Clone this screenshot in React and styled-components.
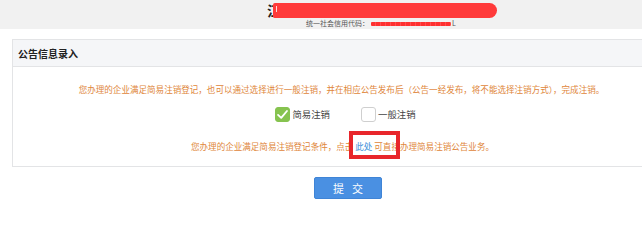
import React, { Component } from "react"
import styled, { createGlobalStyle } from "styled-components"

const GlobalStyle = createGlobalStyle`
  html, body {
    margin: 0;
    padding: 0;
    background: #fff;
    overflow: hidden;
  }
  body {
    font-family: "Noto Sans CJK SC", "Microsoft YaHei", sans-serif;
    color: #333;
  }
`

const Page = styled.div`
  width: 100%;
`

const TopBand = styled.div`
  height: 29px;
  background: #f1f1f1;
  display: flex;
  flex-direction: column;
  align-items: flex-start;
  padding-left: 267px;
  box-sizing: border-box;
`

const NameRow = styled.div`
  position: relative;
  height: 18px;
  display: flex;
  align-items: center;
  margin-top: 1px;
`

const NameText = styled.span`
  font-size: 14px;
  font-weight: 700;
  line-height: 18px;
  color: #222;
`

const NameMask = styled.span`
  position: absolute;
  left: 6px;
  top: 2px;
  width: 224px;
  height: 15px;
  background: #ff3a3a;
  border-radius: 2px 8px 8px 2px;

  &::after {
    content: "";
    position: absolute;
    left: 3px;
    top: 3px;
    width: 1px;
    height: 6px;
    background: rgba(255, 255, 255, 0.8);
  }
`

const CodeRow = styled.div`
  display: flex;
  align-items: center;
  margin-left: 39px;
  font-size: 7px;
  line-height: 9px;
  color: #555;
`

const CodeMask = styled.span`
  display: inline-block;
  width: 80px;
  height: 4px;
  margin: 0 1px 0 2px;
  background: repeating-linear-gradient(
    90deg,
    #ff3030 0,
    #ff3030 4px,
    #ff6a6a 5px
  );
  border-radius: 1px;
`

/* the panel runs on past the right edge of the shot, so no right border */
const Panel = styled.div`
  margin: 10px 0 0 12px;
  border: 1px solid #e3e4e6;
  border-right: none;
`

const PanelHead = styled.div`
  height: 26px;
  background: #f5f6f8;
  border-bottom: 1px solid #e3e4e6;
  display: flex;
  align-items: center;
  padding-left: 5px;
  font-size: 10px;
  font-weight: 700;
  color: #222;
`

const PanelBody = styled.div`
  display: flex;
  flex-direction: column;
  align-items: center;
  padding: 15px 0 13px 28px;
`

const Notice = styled.p`
  margin: 0;
  font-size: 8.55px;
  line-height: 14px;
  color: #e0863a;
  white-space: nowrap;
`

const Choices = styled.div`
  display: flex;
  align-items: center;
  gap: 31px;
  margin: 10px 0 0 8px;
`

const Choice = styled.label`
  display: flex;
  align-items: center;
  gap: 2px;
  font-size: 9.4px;
  line-height: 16px;
  color: #444;
  cursor: pointer;
`

const Box = styled.span`
  width: 15px;
  height: 15px;
  box-sizing: border-box;
  border-radius: 3px;
  display: flex;
  align-items: center;
  justify-content: center;
  background: ${({ checked }) => (checked ? "#86c34f" : "#fff")};
  border: 1px solid ${({ checked }) => (checked ? "#86c34f" : "#cfcfcf")};
`

const LinkNotice = styled(Notice)`
  margin-top: 17px;
  margin-left: 2px;
`

const Link = styled.a`
  position: relative;
  color: #3d8fd9;
  text-decoration: none;
`

const Highlight = styled.span`
  position: absolute;
  left: -6px;
  top: -9px;
  width: 51px;
  height: 28px;
  box-sizing: border-box;
  border: 4px solid #e8262b;
`

const Actions = styled.div`
  display: flex;
  justify-content: center;
  padding: 10px 0 0 54px;
`

const SubmitButton = styled.button`
  width: 68px;
  height: 22px;
  border: 1px solid #3f84d6;
  border-radius: 2px;
  background: #4a90e2;
  color: #fff;
  font-family: inherit;
  font-size: 11px;
  letter-spacing: 8px;
  text-indent: 8px;
  padding: 0;
  cursor: pointer;
`

const Check = () => (
  <svg width="13" height="13" viewBox="0 0 14 14">
    <path
      d="M2.2 7.4 L5.6 10.6 L11.8 3.2"
      fill="none"
      stroke="#fff"
      strokeWidth="2"
      strokeLinecap="round"
      strokeLinejoin="round"
    />
  </svg>
)

class App extends Component {
  constructor(props) {
    super(props)
    this.state = {
      mode: "simple",
    }
  }

  pick = mode => {
    this.setState({ mode })
  }

  render() {
    const { mode } = this.state

    return (
      <Page>
        <GlobalStyle />
        <TopBand>
          <NameRow>
            <NameText>江</NameText>
            <NameMask />
          </NameRow>
          <CodeRow>
            统一社会信用代码：
            <CodeMask />L
          </CodeRow>
        </TopBand>

        <Panel>
          <PanelHead>公告信息录入</PanelHead>
          <PanelBody>
            <Notice>
              您办理的企业满足简易注销登记，也可以通过选择进行一般注销，并在相应公告发布后（公告一经发布，将不能选择注销方式），完成注销。
            </Notice>
            <Choices>
              <Choice onClick={() => this.pick("simple")}>
                <Box checked={mode === "simple"}>
                  {mode === "simple" && <Check />}
                </Box>
                简易注销
              </Choice>
              <Choice onClick={() => this.pick("normal")}>
                <Box checked={mode === "normal"}>
                  {mode === "normal" && <Check />}
                </Box>
                一般注销
              </Choice>
            </Choices>
            <LinkNotice>
              您办理的企业满足简易注销登记条件，点击{" "}
              <Link href="#">
                此处
                <Highlight />
              </Link>{" "}
              可直接办理简易注销公告业务。
            </LinkNotice>
          </PanelBody>
        </Panel>

        <Actions>
          <SubmitButton>提交</SubmitButton>
        </Actions>
      </Page>
    )
  }
}

export default App
